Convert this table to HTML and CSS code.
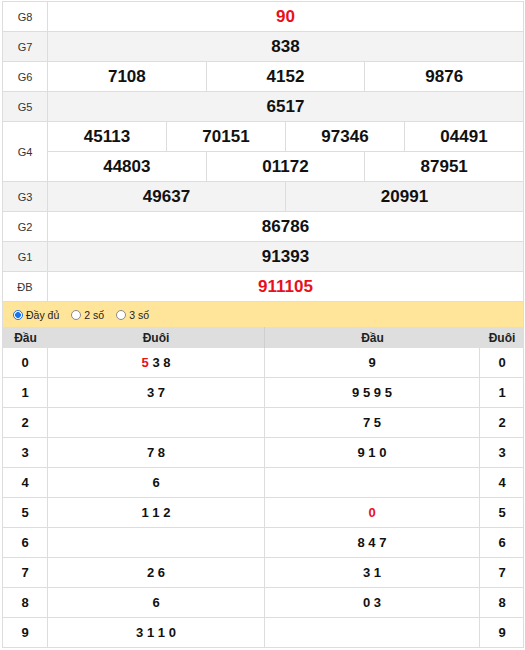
FILE: index.html
```html
<!DOCTYPE html>
<html lang="vi">
<head>
<meta charset="utf-8">
<title>Kết quả xổ số</title>
<link rel="stylesheet" href="styles.css">
</head>
<body>
<div class="kq">
  <div class="row"><div class="lbl">G8</div><div class="nums"><div class="num red">90</div></div></div>
  <div class="row alt"><div class="lbl">G7</div><div class="nums"><div class="num">838</div></div></div>
  <div class="row"><div class="lbl">G6</div><div class="nums"><div class="num">7108</div><div class="num">4152</div><div class="num">9876</div></div></div>
  <div class="row alt"><div class="lbl">G5</div><div class="nums"><div class="num">6517</div></div></div>
  <div class="row"><div class="lbl">G4</div>
    <div class="sub">
      <div class="nums"><div class="num">45113</div><div class="num">70151</div><div class="num">97346</div><div class="num">04491</div></div>
      <div class="nums"><div class="num">44803</div><div class="num">01172</div><div class="num">87951</div></div>
    </div>
  </div>
  <div class="row alt"><div class="lbl">G3</div><div class="nums"><div class="num">49637</div><div class="num">20991</div></div></div>
  <div class="row"><div class="lbl">G2</div><div class="nums"><div class="num">86786</div></div></div>
  <div class="row alt"><div class="lbl">G1</div><div class="nums"><div class="num">91393</div></div></div>
  <div class="row"><div class="lbl">ĐB</div><div class="nums"><div class="num red">911105</div></div></div>

  <div class="opts">
    <label class="opt"><input type="radio" name="mode" checked> Đầy đủ</label>
    <label class="opt"><input type="radio" name="mode"> 2 số</label>
    <label class="opt"><input type="radio" name="mode"> 3 số</label>
  </div>

  <div class="lrow lhead"><div>Đầu</div><div class="mid">Đuôi</div><div>Đầu</div><div>Đuôi</div></div>
  <div class="lrow"><div>0</div><div><span><span class="red">5</span> 3 8</span></div><div>9</div><div>0</div></div>
  <div class="lrow"><div>1</div><div>3 7</div><div>9 5 9 5</div><div>1</div></div>
  <div class="lrow"><div>2</div><div></div><div>7 5</div><div>2</div></div>
  <div class="lrow"><div>3</div><div>7 8</div><div>9 1 0</div><div>3</div></div>
  <div class="lrow"><div>4</div><div>6</div><div></div><div>4</div></div>
  <div class="lrow"><div>5</div><div>1 1 2</div><div><span class="red">0</span></div><div>5</div></div>
  <div class="lrow"><div>6</div><div></div><div>8 4 7</div><div>6</div></div>
  <div class="lrow"><div>7</div><div>2 6</div><div>3 1</div><div>7</div></div>
  <div class="lrow"><div>8</div><div>6</div><div>0 3</div><div>8</div></div>
  <div class="lrow"><div>9</div><div>3 1 1 0</div><div></div><div>9</div></div>
</div>
</body>
</html>
```
FILE: styles.css
```css
* { box-sizing: border-box; }
html, body { margin: 0; padding: 0; background: #fff; }
body { font-family: "Liberation Sans", Arial, sans-serif; color: #111; }

.kq {
  margin: 1px 1px 0 2px;
  width: 522px;
  border-top: 1px solid #ddd;
  border-left: 1px solid #ddd;
  border-right: 1px solid #ddd;
}

.row { display: flex; border-bottom: 1px solid #ddd; background: #fff; }
.row.alt { background: #f3f3f3; }

.lbl {
  width: 45px;
  flex: none;
  border-right: 1px solid #ddd;
  display: flex;
  align-items: center;
  justify-content: center;
  font-size: 11px;
  color: #333;
}

.nums { flex: 1; display: flex; }
.sub { flex: 1; display: flex; flex-direction: column; }
.sub .nums + .nums { border-top: 1px solid #ddd; }

.num {
  flex: 1 1 0;
  height: 29px;
  display: flex;
  align-items: center;
  justify-content: center;
  font-size: 17px;
  font-weight: bold;
  color: #111;
}
.num + .num { border-left: 1px solid #ddd; }

.red { color: #e8101c; }

.opts {
  height: 25px;
  background: #ffe599;
  display: flex;
  align-items: center;
  gap: 12px;
  padding-left: 10px;
  font-size: 10.5px;
  color: #222;
}
.opt { display: flex; align-items: center; gap: 3px; }
.opt input {
  appearance: none;
  -webkit-appearance: none;
  margin: 0;
  width: 10px;
  height: 10px;
  border: 1px solid #8a8a8a;
  border-radius: 50%;
  background: #fff;
}
.opt input:checked {
  border-color: #1a73e8;
  background: radial-gradient(circle, #1a73e8 0 2.6px, #fff 3.2px);
}

.lrow {
  display: grid;
  grid-template-columns: 45px 217px 215px 44px;
  border-bottom: 1px solid #ddd;
}
.lrow > div {
  height: 29px;
  display: flex;
  align-items: center;
  justify-content: center;
  font-size: 13px;
  font-weight: bold;
  border-right: 1px solid #ddd;
}
.lrow > div:last-child { border-right: none; }

.lhead { background: #dedede; border-bottom: none; }
.lhead > div {
  height: 21px;
  font-size: 12px;
  color: #222;
  border-right: none;
}
.lhead > .mid { border-right: 1px solid #cfcfcf; }
```
